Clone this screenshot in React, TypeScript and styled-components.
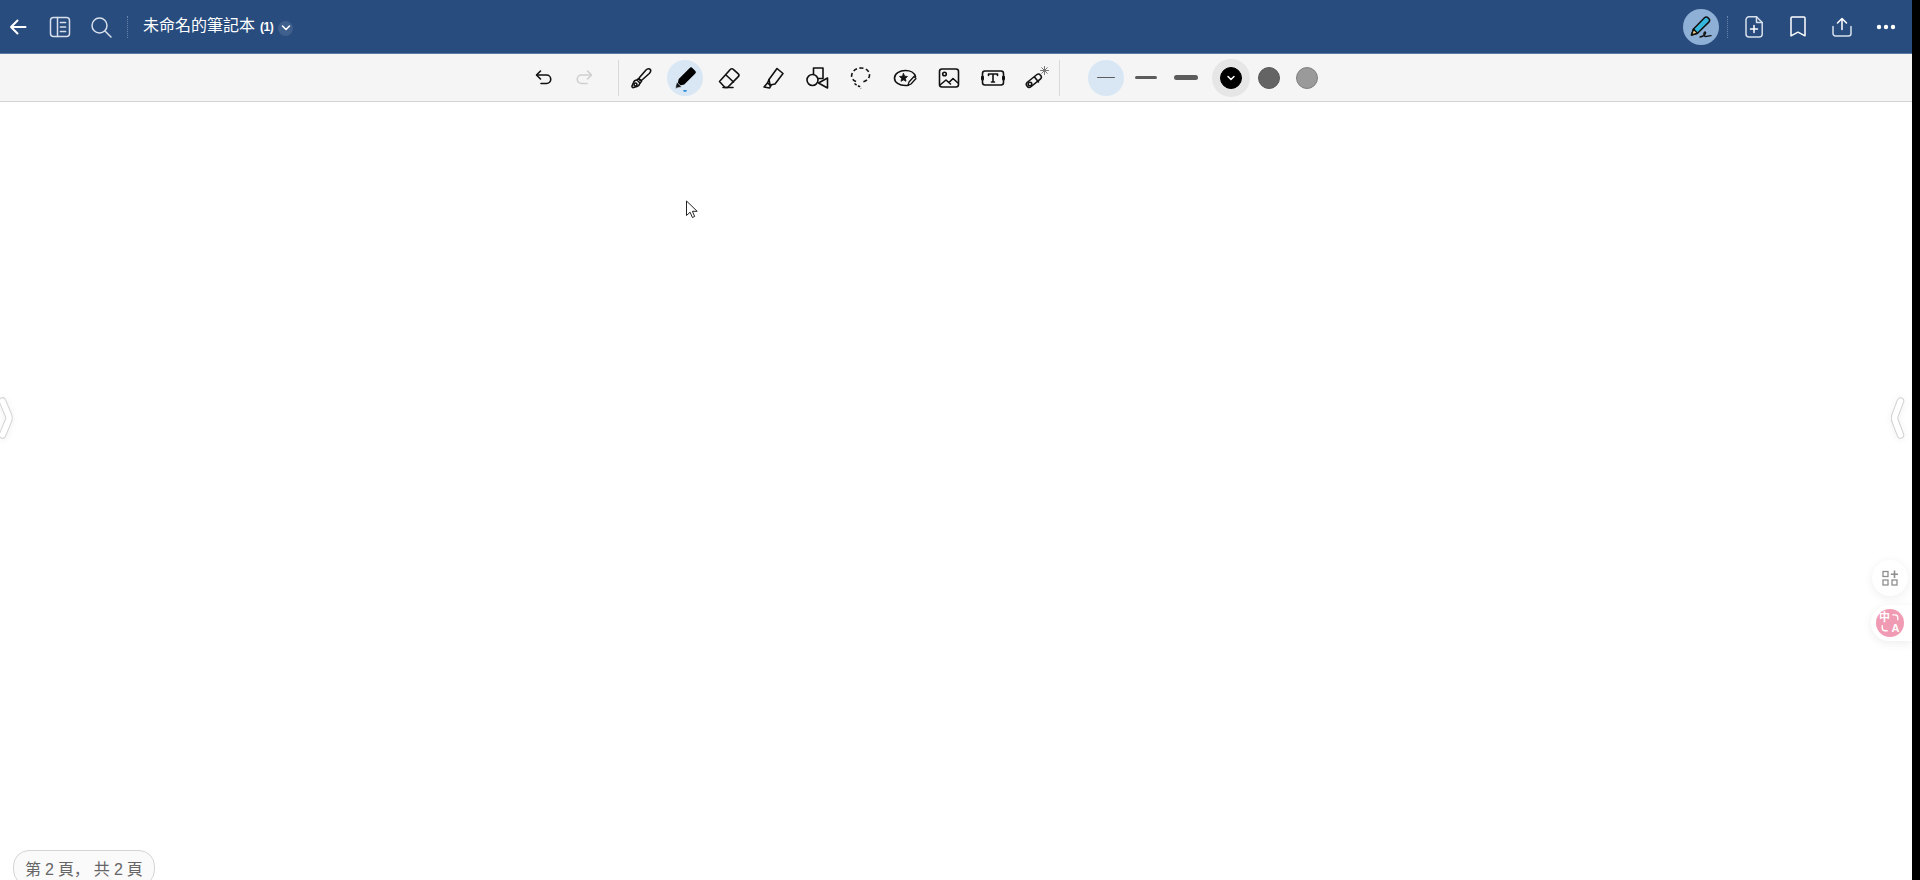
import React from "react";
import styled, { createGlobalStyle } from "styled-components";

const Global = createGlobalStyle`
  html, body { margin: 0; padding: 0; height: 100%; background: #000; overflow: hidden; }
  #root { height: 100%; }
`;

const Page = styled.div`
  width: 1912px;
  height: 880px;
  background: #fff;
  display: flex;
  flex-direction: column;
  position: relative;
  overflow: hidden;
  font-family: "Liberation Sans", "Noto Sans CJK TC", sans-serif;
`;

const TopBar = styled.header`
  height: 53px;
  flex: none;
  background: #294c7e;
  border-bottom: 1px solid #5a7aa6;
  display: flex;
  align-items: center;
  justify-content: space-between;
  color: #fff;
`;

const BarSide = styled.div`
  display: flex;
  align-items: center;
`;

const BarIcon = styled.span<{ $w?: number; $ml?: number }>`
  display: flex;
  align-items: center;
  justify-content: center;
  width: ${(p) => p.$w ?? 24}px;
  height: 24px;
  margin-left: ${(p) => p.$ml ?? 0}px;
  flex: none;
`;

const DotDivider = styled.span<{ $ml: number; $mr: number }>`
  width: 0;
  height: 22px;
  border-left: 1px dotted #6684ad;
  margin: 0 ${(p) => p.$mr}px 0 ${(p) => p.$ml}px;
`;

const Title = styled.span`
  font-size: 16px;
  color: #fff;
  white-space: nowrap;
  margin-bottom: 5px;
`;

const TitleCount = styled.b`
  font-size: 12px;
  letter-spacing: -0.5px;
  margin-left: 5px;
`;

const ChevronBadge = styled.span`
  width: 15px;
  height: 15px;
  border-radius: 50%;
  background: #3f5f8d;
  margin: 3px 0 0 5px;
  display: flex;
  align-items: center;
  justify-content: center;
`;

const PenBubble = styled.span`
  width: 36px;
  height: 36px;
  border-radius: 50%;
  background: #8fb0d6;
  display: flex;
  align-items: center;
  justify-content: center;
`;

const ToolBar = styled.div`
  height: 47px;
  flex: none;
  background: #f5f5f5;
  border-bottom: 1px solid #d2d2d2;
  display: flex;
  align-items: center;
  padding-left: 526px;
`;

const Tool = styled.span<{ $active?: boolean; $ml?: number }>`
  width: 36px;
  height: 36px;
  flex: none;
  margin-left: ${(p) => p.$ml ?? 8}px;
  border-radius: 50%;
  display: flex;
  align-items: center;
  justify-content: center;
  position: relative;
  background: ${(p) => (p.$active ? "#d9e7f5" : "transparent")};
`;

const ActiveMark = styled.span`
  position: absolute;
  left: 16px;
  bottom: 4px;
  width: 4px;
  height: 2px;
  border-radius: 0 0 3px 3px;
  background: #3a93d8;
`;

const ToolDivider = styled.span<{ $ml: number; $mr: number }>`
  width: 1px;
  height: 36px;
  flex: none;
  background: #d9d9d9;
  margin: 0 ${(p) => p.$mr}px 0 ${(p) => p.$ml}px;
`;

const Stroke = styled.span<{ $active?: boolean; $ml: number }>`
  width: 36px;
  height: 36px;
  flex: none;
  margin-left: ${(p) => p.$ml}px;
  border-radius: 50%;
  display: flex;
  align-items: center;
  justify-content: center;
  background: ${(p) => (p.$active ? "#d9e7f5" : "transparent")};
`;

const StrokeLine = styled.span<{ $w: number; $h: number }>`
  width: ${(p) => p.$w}px;
  height: ${(p) => p.$h}px;
  border-radius: ${(p) => p.$h}px;
  background: #5c5c5c;
`;

const ColorHalo = styled.span<{ $active?: boolean; $ml: number }>`
  width: 38px;
  height: 38px;
  flex: none;
  margin-left: ${(p) => p.$ml}px;
  border-radius: 50%;
  display: flex;
  align-items: center;
  justify-content: center;
  background: ${(p) => (p.$active ? "#e6e6e6" : "transparent")};
`;

const Swatch = styled.span<{ $c: string; $b: string }>`
  width: 22px;
  height: 22px;
  border-radius: 50%;
  box-sizing: border-box;
  background: ${(p) => p.$c};
  border: 1px solid ${(p) => p.$b};
  display: flex;
  align-items: center;
  justify-content: center;
`;

const Canvas = styled.main`
  flex: 1;
  position: relative;
  background: #fff;
`;

const EdgeHandle = styled.svg<{ $side: "left" | "right"; $off: number }>`
  position: absolute;
  top: 295px;
  ${(p) => p.$side}: ${(p) => p.$off}px;
  filter: drop-shadow(0 1px 3px rgba(0, 0, 0, 0.06));
`;

const FloatCircle = styled.span<{ $top: number }>`
  position: absolute;
  top: ${(p) => p.$top}px;
  right: 4px;
  width: 36px;
  height: 36px;
  border-radius: 50%;
  background: #fff;
  box-shadow: 0 2px 10px rgba(0, 0, 0, 0.07);
  display: flex;
  align-items: center;
  justify-content: center;
`;

const TranslateTab = styled.span<{ $top: number }>`
  position: absolute;
  top: ${(p) => p.$top}px;
  right: 0;
  width: 41px;
  height: 36px;
  padding-left: 5px;
  box-sizing: border-box;
  border-radius: 18px 0 0 18px;
  background: #fff;
  box-shadow: 0 2px 10px rgba(0, 0, 0, 0.08);
  display: flex;
  align-items: center;
`;

const TranslateBadge = styled.span`
  width: 28px;
  height: 28px;
  border-radius: 50%;
  background: #f19ab3;
  color: #fff;
  display: grid;
  grid-template-columns: 11px 11px;
  grid-template-rows: 11px 11px;
  justify-content: center;
  align-content: center;
  align-items: center;
  justify-items: center;
  font-family: "Liberation Sans", "Noto Sans CJK SC", sans-serif;
  font-size: 11px;
  font-weight: 700;
  line-height: 11px;
`;

const PageBadge = styled.div`
  position: absolute;
  left: 13px;
  bottom: -6px;
  height: 36px;
  padding: 10px 11px 0 11px;
  box-sizing: border-box;
  background: #fafafa;
  border: 1px solid #d4d4d4;
  border-radius: 16px;
  font-family: "Liberation Sans", "Noto Sans CJK SC", sans-serif;
  font-size: 16px;
  line-height: 18px;
  letter-spacing: -0.2px;
  color: #666;
  white-space: nowrap;
`;

const Cursor = styled.svg`
  position: absolute;
  left: 685px;
  top: 98px;
`;

const iconProps = { fill: "none", stroke: "#111", strokeWidth: 1.6, strokeLinecap: "round", strokeLinejoin: "round" } as const;
const whiteProps = { fill: "none", stroke: "#fff", strokeWidth: 1.5, strokeLinecap: "round", strokeLinejoin: "round" } as const;
const softProps = { ...whiteProps, stroke: "#d6dfeb" };

const App = () => (
  <>
    <Global />
    <Page>
      <TopBar>
        <BarSide>
          <BarIcon $w={18} $ml={9}>
            <svg width="18" height="18" viewBox="0 0 18 18" {...whiteProps} strokeWidth={2}>
              <path d="M16.500 9H2M8.500 2.500 2 9l6.500 6.500" />
            </svg>
          </BarIcon>
          <BarIcon $w={22} $ml={22}>
            <svg width="22" height="22" viewBox="0 0 22 22" {...softProps}>
              <rect x="1.500" y="1.500" width="19" height="19" rx="3" />
              <path d="M8.500 1.500v19" />
              <path d="M11.500 6.500h5M11.500 11h5M11.500 15.500h5" strokeWidth={1.700} />
            </svg>
          </BarIcon>
          <BarIcon $w={22} $ml={19}>
            <svg width="22" height="22" viewBox="0 0 22 22" {...softProps}>
              <circle cx="9.500" cy="9.500" r="7.500" />
              <path d="m15 15 6 6" />
            </svg>
          </BarIcon>
          <DotDivider $ml={15} $mr={15} />
          <Title>
            未命名的筆記本<TitleCount>(1)</TitleCount>
          </Title>
          <ChevronBadge>
            <svg width="10" height="10" viewBox="0 0 10 10" {...whiteProps} strokeWidth={1.600}>
              <path d="m1.500 3 3.500 3.500L8.500 3" />
            </svg>
          </ChevronBadge>
        </BarSide>
        <BarSide>
          <PenBubble>
            <svg width="26" height="26" viewBox="0 0 26 26">
              <path d="m3.500 21 2-6L16.500 3.800c1-1 2.500-1 3.500 0l.8.8c1 1 1 2.500 0 3.500L9.500 19.200Z" fill="#35b7dd" stroke="#111" strokeWidth="1.500" strokeLinejoin="round" />
              <path d="m3.500 21 2-6 4 4.200Z" fill="#f2d58c" stroke="#111" strokeWidth="1.500" strokeLinejoin="round" />
              <path d="M12 23c3-.3 4.500-1.500 5.500-3.500.5-1-.3-2-1-1.300-1 1-1 4 1 4.300 1.500.2 3.500-1 5.500-.8" fill="none" stroke="#111" strokeWidth="1.300" strokeLinecap="round" />
            </svg>
          </PenBubble>
          <DotDivider $ml={8} $mr={16} />
          <BarIcon $w={20}>
            <svg width="18" height="22" viewBox="0 0 18 22" {...softProps}>
              <path d="M4 .8h7.500L17.200 6.500V18a3 3 0 0 1-3 3H4a3 3 0 0 1-3-3V3.800a3 3 0 0 1 3-3Z" />
              <path d="M11.500 .8v5.700h5.700" />
              <path d="M9 9.500v7M5.500 13h7" stroke="#fff" />
            </svg>
          </BarIcon>
          <BarIcon $w={18} $ml={25}>
            <svg width="16" height="21" viewBox="0 0 16 21" {...whiteProps}>
              <path d="M1 2c0-.6.500-1 1-1h12c.5 0 1 .4 1 1v17.800l-7-3.600-7 3.600Z" />
            </svg>
          </BarIcon>
          <BarIcon $w={22} $ml={24}>
            <svg width="20" height="20" viewBox="0 0 20 20" {...softProps}>
              <path d="M10 12.500V1.500M5.500 6 10 1.500 14.500 6" stroke="#fff" />
              <path d="M1 9.500v7a2.500 2.500 0 0 0 2.500 2.500h13a2.500 2.500 0 0 0 2.500-2.500v-7" />
            </svg>
          </BarIcon>
          <BarIcon $w={20} $ml={23}>
            <svg width="20" height="6" viewBox="0 0 20 6" fill="#fff">
              <circle cx="3" cy="3" r="2.200" />
              <circle cx="10" cy="3" r="2.200" />
              <circle cx="17" cy="3" r="2.200" />
            </svg>
          </BarIcon>
          <BarIcon $w={16} />
        </BarSide>
      </TopBar>

      <ToolBar>
        <Tool $ml={0}>
          <svg width="20" height="20" viewBox="0 0 20 20" {...iconProps}>
            <path d="M3 7h9.500a3.500 3.500 0 0 1 0 8.500H7" />
            <path d="M6.500 3 2.500 7l4 4" />
          </svg>
        </Tool>
        <Tool $ml={4}>
          <svg width="20" height="20" viewBox="0 0 20 20" {...iconProps} stroke="#cfcfcf">
            <path d="M17 7H7.500a3.500 3.500 0 0 0 0 8.500H13" />
            <path d="m13.500 3 4 4-4 4" />
          </svg>
        </Tool>
        <ToolDivider $ml={16} $mr={4} />
        <Tool $ml={0}>
          <svg width="22" height="22" viewBox="0 0 22 22" {...iconProps}>
            <path d="M9.500 10.500 16 3c1.500-1.500 3.500-1.500 4.300-.5.700 1 .2 2.700-1 4L12 13c-.8.500-1.800.2-2.300-.5-.5-.5-.5-1.300-.2-2Z" />
            <path d="m8.500 11.500 3 3-1.500 1.500-3-3Z" />
            <path d="M7 13c-2 0-3 1-3.500 2.500L2 19c-.3 1 .5 1.800 1.500 1.500l3.500-1c1.500-.5 2.500-1.500 3-3.500" />
            <circle cx="5.500" cy="17.500" r="1.500" />
          </svg>
        </Tool>
        <Tool $active>
          <svg width="25" height="25" viewBox="0 0 24 24">
            <path d="m3.800 20.500 1.700-7L15.800 3c1-1 2-1 3 0l2.400 2.400c1 1 1 2 0 3L10.800 18.700Z" fill="#000" />
            <path d="M2.200 22.500 3.500 16.200l4.800 4.800Z" fill="#111" stroke="#d9e7f5" strokeWidth=".7" />
          </svg>
          <ActiveMark />
        </Tool>
        <Tool>
          <svg width="24" height="24" viewBox="0 0 24 24" {...iconProps}>
            <path d="M2.500 15.500 13.500 3.300c.8-.8 2-.8 2.800 0l5 4.500c.8.800.8 2 0 2.800L10.500 21.500H8Z" />
            <path d="m9 9 7.500 7M6 21.500h10" />
          </svg>
        </Tool>
        <Tool>
          <svg width="24" height="24" viewBox="0 0 24 24" {...iconProps}>
            <path d="m8 13.500 8-11 6 5-8 10.500-5 1Z" />
            <path d="m8 13.500-1.500 3.500 3 2.500" />
            <path d="m6.500 17-3.500 4 5.500 1 1.500-2.500" />
          </svg>
        </Tool>
        <Tool>
          <svg width="24" height="24" viewBox="0 0 24 24" {...iconProps}>
            <path d="M8.500 8.500V2h9.500v10.500h-4.500" />
            <circle cx="7.500" cy="14" r="5.500" />
            <path d="M22.500 12v10l-9-5Z" fill="#f5f5f5" />
          </svg>
        </Tool>
        <Tool>
          <svg width="24" height="24" viewBox="0 0 24 24" {...iconProps} strokeLinecap="butt">
            <path d="M7 15.500C3.500 14 2 11.500 2.800 8.500 3.800 4.500 7.500 2 12 2c4.800 0 8.500 3 8.500 7 0 4-4 7-8.500 7" strokeDasharray="4 2.500" />
            <path d="M5.500 17.500c1.500 1.500 3.500 2 5 3l1.500 2" strokeDasharray="2.500 1.500" />
          </svg>
        </Tool>
        <Tool>
          <svg width="24" height="24" viewBox="0 0 24 24" {...iconProps}>
            <path d="M22.500 10.500C21.500 7 17.500 4.500 12.500 4.500 6.500 4.500 1.500 7.500 1.500 12s4.500 7.500 11 7.500c1 0 1.500 0 2.500-.2" />
            <path d="m10.500 7.500 1.200 2.700 2.800.3-2.100 2 .6 2.800-2.500-1.400-2.500 1.400.6-2.800-2.100-2 2.800-.3Z" fill="#111" strokeWidth=".8" />
            <path d="m15 19.500 1-3.500 5-5.500 2 2-5 5.500Z" strokeWidth="1.300" />
          </svg>
        </Tool>
        <Tool>
          <svg width="22" height="22" viewBox="0 0 22 22" {...iconProps}>
            <rect x="1.500" y="2" width="19" height="18" rx="2.500" />
            <circle cx="6.500" cy="7" r="1.800" />
            <path d="m2 18 6-5 4.500 4M11 15.500l4-4 5 4.500" />
          </svg>
        </Tool>
        <Tool>
          <svg width="24" height="24" viewBox="0 0 24 24" {...iconProps}>
            <rect x="1.500" y="5" width="21" height="14" rx="2.500" />
            <path d="M7.500 9.500V8h9v1.500M12 8v8M10.500 16h3" />
            <path d="M1.500 11v2M22.500 11v2" strokeWidth="3" />
          </svg>
        </Tool>
        <Tool>
          <svg width="26" height="26" viewBox="0 0 26 26" {...iconProps}>
            <path d="m3 17.500 10-8c1-.8 2.300-.7 3 .2l.9 1.100c.8 1 .6 2.300-.3 3l-10 8.200c-1 .8-2.300.6-3-.3l-1-1.200c-.7-1-.4-2.200.4-3Z" />
            <circle cx="6" cy="19" r="1.800" />
            <path d="m10.500 12 4 5" />
            <path d="M20.500 1.500v8M16.500 5.500h8M17.700 2.700l5.600 5.600M23.300 2.700l-5.600 5.600" stroke="#777" strokeWidth="1" />
          </svg>
        </Tool>
        <ToolDivider $ml={4} $mr={28} />
        <Stroke $active $ml={0}>
          <StrokeLine $w={18} $h={1} />
        </Stroke>
        <Stroke $ml={4}>
          <StrokeLine $w={22} $h={3} />
        </Stroke>
        <Stroke $ml={4}>
          <StrokeLine $w={24} $h={5} />
        </Stroke>
        <ColorHalo $active $ml={8}>
          <Swatch $c="#000" $b="#000">
            <svg width="10" height="10" viewBox="0 0 10 10" {...whiteProps} strokeWidth={1.500}>
              <path d="m2 3.500 3 3 3-3" />
            </svg>
          </Swatch>
        </ColorHalo>
        <ColorHalo $ml={0}>
          <Swatch $c="#646464" $b="#5a5a5a" />
        </ColorHalo>
        <ColorHalo $ml={0}>
          <Swatch $c="#9a9a9a" $b="#808080" />
        </ColorHalo>
      </ToolBar>

      <Canvas>
        <Cursor width="14" height="20" viewBox="0 0 14 20">
          <path d="M1.500 1v14.500l3.600-3.300 2.300 5.300 2.300-1-2.300-5.200h4.800Z" fill="#fff" stroke="#222" strokeWidth="1" strokeLinejoin="round" />
        </Cursor>
        <EdgeHandle $side="left" $off={0} width="14" height="42" viewBox="0 0 14 42" fill="none" strokeLinecap="round" strokeLinejoin="round">
          <path d="M2.500 4 8.500 18.500q1 2.500 0 5L2.500 38" stroke="#d4d4d4" strokeWidth="7.500" />
          <path d="M2.500 4 8.500 18.500q1 2.500 0 5L2.500 38" stroke="#fff" strokeWidth="5.500" />
        </EdgeHandle>
        <EdgeHandle $side="right" $off={7} width="14" height="42" viewBox="0 0 14 42" fill="none" strokeLinecap="round" strokeLinejoin="round">
          <path d="M9.500 4 4 18.500q-1 2.500 0 5L9.500 38" stroke="#d0d0d0" strokeWidth="7.500" />
          <path d="M9.500 4 4 18.500q-1 2.500 0 5L9.500 38" stroke="#fff" strokeWidth="5.500" />
        </EdgeHandle>
        <FloatCircle $top={458}>
          <svg width="16" height="16" viewBox="0 0 16 16" fill="none" stroke="#8e8e8e" strokeWidth="1.300">
            <rect x="1" y="1.500" width="5" height="5" />
            <rect x="1" y="10" width="5" height="5" />
            <rect x="10" y="10" width="5" height="5" />
            <path d="M12.500 .5v7.500M8.800 4.200h7.200" strokeWidth="1.600" />
          </svg>
        </FloatCircle>
        <TranslateTab $top={503}>
          <TranslateBadge>
            <span>中</span>
            <svg width="9" height="9" viewBox="0 0 10 10" fill="none" stroke="#fff" strokeWidth="1.500">
              <path d="M1.500 2h3a3 3 0 0 1 3 3v3" />
            </svg>
            <svg width="9" height="9" viewBox="0 0 10 10" fill="none" stroke="#fff" strokeWidth="1.500">
              <path d="M2.500 1.500v3a3 3 0 0 0 3 3h3" />
            </svg>
            <span>A</span>
          </TranslateBadge>
        </TranslateTab>
        <PageBadge>第 2 頁， 共 2 頁</PageBadge>
      </Canvas>
    </Page>
  </>
);

export default App;
